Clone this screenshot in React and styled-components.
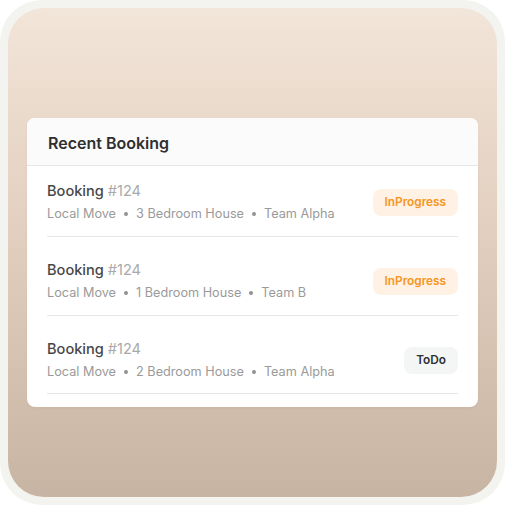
import React from "react";
import styled, { createGlobalStyle } from "styled-components";

const Global = createGlobalStyle`
  body {
    margin: 0;
    background: #ffffff;
    font-family: Inter, "Noto Sans", sans-serif;
  }
`;

const Frame = styled.div`
  width: 505px;
  height: 505px;
  box-sizing: border-box;
  padding: 8px;
  border-radius: 42px;
  background: #f3f3ef;
`;

const Panel = styled.div`
  height: 100%;
  box-sizing: border-box;
  border-radius: 36px;
  padding: 110px 19px 0;
  background: linear-gradient(180deg, #f2e5d9 0%, #e2cfbf 45%, #c8b4a2 100%);
`;

const Card = styled.div`
  background: #ffffff;
  border-radius: 8px;
  overflow: hidden;
  box-shadow: 0 1px 2px rgba(120, 90, 60, 0.08);
`;

const CardHeader = styled.div`
  height: 48px;
  box-sizing: border-box;
  display: flex;
  align-items: center;
  padding: 2px 21px 0;
  background: #fbfbfb;
  border-bottom: 1px solid #e6e6e6;
  font-size: 16px;
  font-weight: 600;
  color: #2f2f2f;
`;

const List = styled.div`
  padding: 0 20px 13px;
`;

const Row = styled.div`
  display: flex;
  align-items: center;
  justify-content: space-between;
  padding: 23px 0 13px;
  border-bottom: 1px solid #e6e6e6;

  &:first-child {
    padding-top: 15px;
  }

  &:last-child {
    padding-bottom: 12px;
  }
`;

const Info = styled.div`
  display: flex;
  flex-direction: column;
  gap: 4px;
`;

const Title = styled.div`
  font-size: 14.6px;
  line-height: 20px;
  font-weight: 500;
  color: #484848;

  span {
    font-weight: 400;
    color: #a9a9a9;
  }
`;

const Meta = styled.div`
  display: flex;
  align-items: center;
  gap: 8px;
  font-size: 12.7px;
  line-height: 18px;
  color: #9a9a9a;
`;

const Dot = styled.span`
  width: 4px;
  height: 4px;
  border-radius: 50%;
  background: #929292;
`;

const Badge = styled.div`
  height: 27px;
  padding: 0 12px;
  display: flex;
  align-items: center;
  border-radius: 8px;
  font-size: 11.8px;
  font-weight: 600;
  background: ${(p) => (p.$tone === "progress" ? "#fff1e4" : "#f4f5f5")};
  color: ${(p) => (p.$tone === "progress" ? "#f5961f" : "#2d3136")};
`;

const bookings = [
  { id: "#124", house: "3 Bedroom House", team: "Team Alpha", status: "InProgress", tone: "progress" },
  { id: "#124", house: "1 Bedroom House", team: "Team B", status: "InProgress", tone: "progress" },
  { id: "#124", house: "2 Bedroom House", team: "Team Alpha", status: "ToDo", tone: "todo" },
];

export default function App() {
  return (
    <>
      <Global />
      <Frame>
        <Panel>
          <Card>
            <CardHeader>Recent Booking</CardHeader>
            <List>
              {bookings.map((b, i) => (
                <Row key={i}>
                  <Info>
                    <Title>
                      Booking <span>{b.id}</span>
                    </Title>
                    <Meta>
                      Local Move <Dot /> {b.house} <Dot /> {b.team}
                    </Meta>
                  </Info>
                  <Badge $tone={b.tone}>{b.status}</Badge>
                </Row>
              ))}
            </List>
          </Card>
        </Panel>
      </Frame>
    </>
  );
}
